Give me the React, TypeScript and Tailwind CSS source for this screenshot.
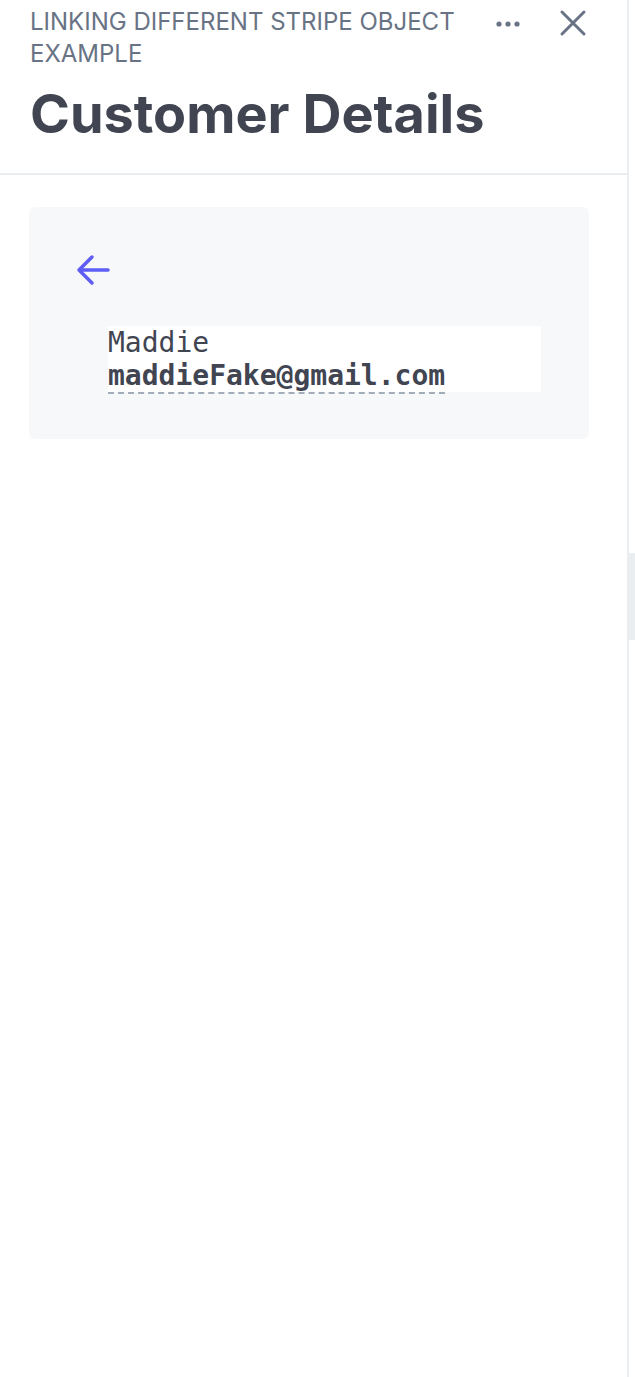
export default function App() {
  return (
    <div className="flex h-[1377px] w-[635px] bg-white font-['Inter',sans-serif]">
      <div className="flex w-[629px] flex-col border-r-2 border-[#ebeef1]">
        <div className="flex flex-col border-b-2 border-[#ebeef1] px-[30px] pb-[28px] pt-[6px]">
          <div className="flex items-start justify-between">
            <div className="w-[450px] text-[24px] uppercase leading-[32px] text-[#687385]">
              Linking different stripe object example
            </div>
            <div className="flex items-center gap-[38px] pr-[10px] pt-[2px]">
              <svg width="26" height="8" viewBox="0 0 26 8" className="mt-[2px]">
                <circle cx="4" cy="4" r="2.6" fill="#687385" />
                <circle cx="13" cy="4" r="2.6" fill="#687385" />
                <circle cx="22" cy="4" r="2.6" fill="#687385" />
              </svg>
              <svg width="28" height="28" viewBox="0 0 28 28" className="mt-[1px]">
                <path d="M3 3L25 25M25 3L3 25" stroke="#687385" strokeWidth="3" strokeLinecap="round" />
              </svg>
            </div>
          </div>
          <div className="mt-[13px] text-[54px] font-bold leading-[62px] text-[#414552]">Customer Details</div>
        </div>
        <div className="px-[29px] pt-[32px]">
          <div className="flex h-[232px] w-[560px] flex-col rounded-[6px] bg-[#f6f8fa] px-[47px] pt-[47px]">
            <svg width="34" height="33" viewBox="0 0 34 33">
              <path d="M3 16H32M16 3L3 16L16 29" fill="none" stroke="#5e5df5" strokeWidth="3.5" strokeLinecap="round" strokeLinejoin="round" />
            </svg>
            <div className="ml-[32px] mt-[39px] w-[433px] bg-white font-['DejaVu_Sans_Mono',monospace] text-[28px] leading-[33px] text-[#414552]">
              <div className="h-[33px]">Maddie</div>
              <div className="h-[33px]">
                <span className="border-b-2 border-dashed border-[#a3acb9] font-bold">maddieFake@gmail.com</span>
              </div>
            </div>
          </div>
        </div>
      </div>
      <div className="mt-[553px] h-[87px] w-[6px] bg-[#ebeef1]" />
    </div>
  );
}
